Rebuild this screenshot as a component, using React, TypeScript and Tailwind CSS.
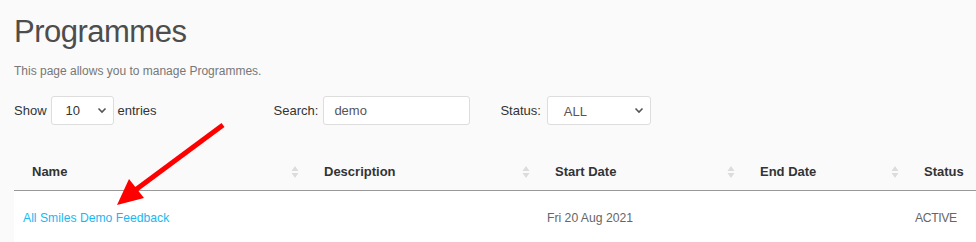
import React from 'react';

const font = { fontFamily: '"Liberation Sans", Arial, sans-serif' };

function SortIcon() {
  return (
    <svg width="8" height="14" viewBox="0 0 8 14" className="shrink-0">
      <path d="M4 1 L7.5 6 L0.5 6 Z" fill="#dcdcdc" />
      <path d="M4 13 L7.5 8 L0.5 8 Z" fill="#dcdcdc" />
    </svg>
  );
}

function Chevron() {
  return (
    <svg width="10" height="7" viewBox="0 0 10 7">
      <path d="M1.5 1.5 L5 5 L8.5 1.5" fill="none" stroke="#555" strokeWidth="1.6" />
    </svg>
  );
}

const columns = [
  { label: 'Name', w: 'w-[292px]' },
  { label: 'Description', w: 'w-[231px]' },
  { label: 'Start Date', w: 'w-[205px]' },
  { label: 'End Date', w: 'w-[164px]' },
  { label: 'Status', w: 'w-[90px]' },
];

export default function App() {
  return (
    <div className="relative w-[976px] h-[242px] overflow-hidden bg-[#fafafa] text-[#333]" style={font}>
      <div className="pl-[14px] pt-[12px]">
        <h1 className="text-[31px] leading-[40px] text-[#4d4d4d] tracking-[-0.5px]">Programmes</h1>
        <p className="mt-[11px] text-[12px] leading-[16px] text-[#777]">This page allows you to manage Programmes.</p>

        <div className="mt-[17px] flex items-center h-[29px] text-[13px] text-[#333]">
          <span>Show</span>
          <div className="ml-[4px] w-[63px] h-[29px] bg-white border border-[#ddd] rounded-[3px] flex items-center justify-between pl-[14px] pr-[6px]">
            <span>10</span>
            <Chevron />
          </div>
          <span className="ml-[4px]">entries</span>

          <span className="ml-[117px]">Search:</span>
          <div className="ml-[5px] w-[147px] h-[29px] bg-white border border-[#ddd] rounded-[3px] flex items-center pl-[10px] text-[#555]">
            demo
          </div>

          <span className="ml-[30px]">Status:</span>
          <div className="ml-[6px] w-[104px] h-[29px] bg-white border border-[#ddd] rounded-[3px] flex items-center justify-between pl-[16px] pr-[6px] text-[#555]">
            <span className="mt-[3px]">ALL</span>
            <Chevron />
          </div>
        </div>

        <div className="mt-[28px] w-[962px]">
          <div className="flex h-[38px] border-b border-[#999] text-[13px] font-bold text-[#333]">
            {columns.map((c, i) => (
              <div key={c.label} className={`${c.w} shrink-0 flex items-center justify-between pl-[18px] pr-[7px]`}>
                <span>{c.label}</span>
                {i < 4 && <SortIcon />}
              </div>
            ))}
          </div>
          <div className="flex h-[54px] bg-white text-[12.2px] items-center">
            <div className="w-[292px] shrink-0 pl-[9px] text-[#1ab7f0]">All Smiles Demo Feedback</div>
            <div className="w-[231px] shrink-0" />
            <div className="w-[205px] shrink-0 pl-[10px] text-[#666]">Fri 20 Aug 2021</div>
            <div className="w-[164px] shrink-0" />
            <div className="w-[70px] shrink-0 pl-[9px] text-[#666] tracking-[-0.4px]">ACTIVE</div>
          </div>
        </div>
      </div>

      {/* annotation arrow */}
      <svg className="absolute left-0 top-0 pointer-events-none" width="976" height="242">
        <line x1="223" y1="125" x2="134" y2="191" stroke="#ff0000" strokeWidth="5" />
        <path d="M117 205 L129 179 L144 198 Z" fill="#ff0000" />
      </svg>
    </div>
  );
}
